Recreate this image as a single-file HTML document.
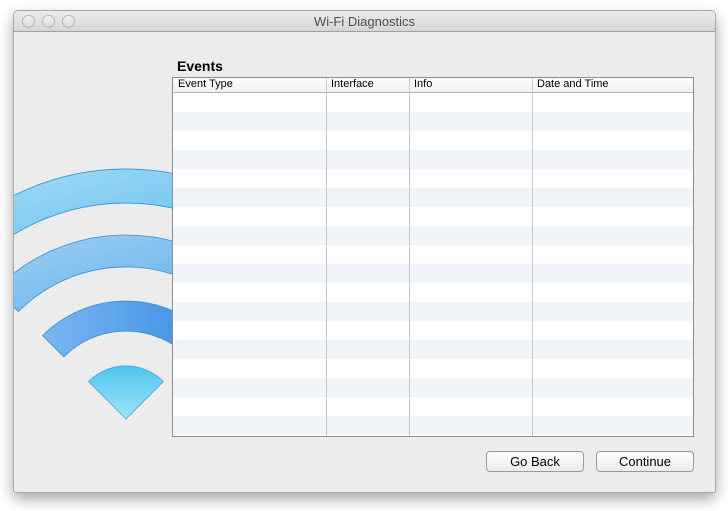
<!DOCTYPE html>
<html><head><style>
body{margin:0;width:728px;height:511px;background:#fff;font-family:"Liberation Sans",sans-serif;position:relative;overflow:hidden}
.win{position:absolute;left:13px;top:10px;width:701px;height:481px;background:#ececec;border:1px solid #a8a8a8;border-radius:5px 5px 3px 3px;box-shadow:0 6px 14px rgba(0,0,0,.35);overflow:hidden}
.tb{height:20px;background:linear-gradient(#ebebeb,#d6d6d6);border-bottom:1px solid #a0a0a0;text-align:center;font-size:13px;line-height:21px;color:#4d4d4d}
.dot{position:absolute;top:4px;width:11px;height:11px;border-radius:50%;border:1px solid #b5b5b5;background:linear-gradient(#f4f4f4,#d8d8d8)}
.h{position:absolute;left:163px;top:47px;font-weight:bold;font-size:14px;color:#000}
.tbl{position:absolute;left:158px;top:66px;width:520px;height:358px;border:1px solid #8e8e8e;background:#fff;overflow:hidden}
.hd{height:14px;border-bottom:1px solid #b8b8b8;font-size:11px;line-height:13px;background:linear-gradient(#fff,#f0f0f0)}
.hd span{position:absolute;top:0;padding-left:5px}
.rows{position:absolute;top:15px;left:0;right:0;bottom:0;background:repeating-linear-gradient(#fff 0,#fff 19px,#f1f4f9 19px,#f1f4f9 38px)}
.cl{position:absolute;top:0;bottom:0;width:1px;background:#c8c8c8}
.btn{position:absolute;top:440px;height:19px;border:1px solid #9a9a9a;border-radius:4px;background:linear-gradient(#fff,#ececec);font-size:13px;text-align:center;line-height:19px}
</style></head><body>
<div class="win">
<div class="tb">Wi‑Fi Diagnostics</div>
<div class="dot" style="left:8px"></div><div class="dot" style="left:28px"></div><div class="dot" style="left:48px"></div>
<svg style="position:absolute;left:0;top:0" width="160" height="481">
<defs><linearGradient id="g" x1="0" y1="0" x2="1" y2="1"><stop offset="0" stop-color="#a7dcf6"/><stop offset="1" stop-color="#4fb8ee"/></linearGradient>
<linearGradient id="g2" x1="0" y1="0" x2="1" y2="1"><stop offset="0" stop-color="#9fd0f4"/><stop offset="1" stop-color="#5aaeea"/></linearGradient>
<linearGradient id="g3" x1="0" y1="0" x2="1" y2="0"><stop offset="0" stop-color="#7ab6f0"/><stop offset="1" stop-color="#3b8fe6"/></linearGradient>
<linearGradient id="w" x1="0" y1="0" x2="0" y2="1"><stop offset="0" stop-color="#4ec3ee"/><stop offset="1" stop-color="#9ee6fb"/></linearGradient></defs>
<g stroke="#3a90c8" stroke-width="0.8">
<path d="M-64.8 231.2 A250 250 0 0 1 288.8 231.2 L264.7 255.3 A216 216 0 0 0 -40.7 255.3 Z" fill="url(#g)"/>
<path d="M-18.1 277.9 A184 184 0 0 1 242.1 277.9 L219.5 300.5 A152 152 0 0 0 4.5 300.5 Z" fill="url(#g2)"/>
<path d="M28.6 324.6 A118 118 0 0 1 195.4 324.6 L174.2 345.8 A88 88 0 0 0 49.8 345.8 Z" fill="url(#g3)"/>
<path d="M112 408 L74.5 370.5 A53 53 0 0 1 149.5 370.5 Z" fill="url(#w)" stroke="#3aa8d8"/>
</g></svg>
<div class="h">Events</div>
<div class="tbl">
<div class="hd"><span style="left:0">Event Type</span><span style="left:153px">Interface</span><span style="left:236px">Info</span><span style="left:359px">Date and Time</span></div>
<div class="rows"></div>
<div class="cl" style="left:153px"></div><div class="cl" style="left:236px"></div><div class="cl" style="left:359px"></div>
</div>
<div class="btn" style="left:472px;width:96px">Go Back</div>
<div class="btn" style="left:582px;width:96px">Continue</div>
</div>
</body></html>
